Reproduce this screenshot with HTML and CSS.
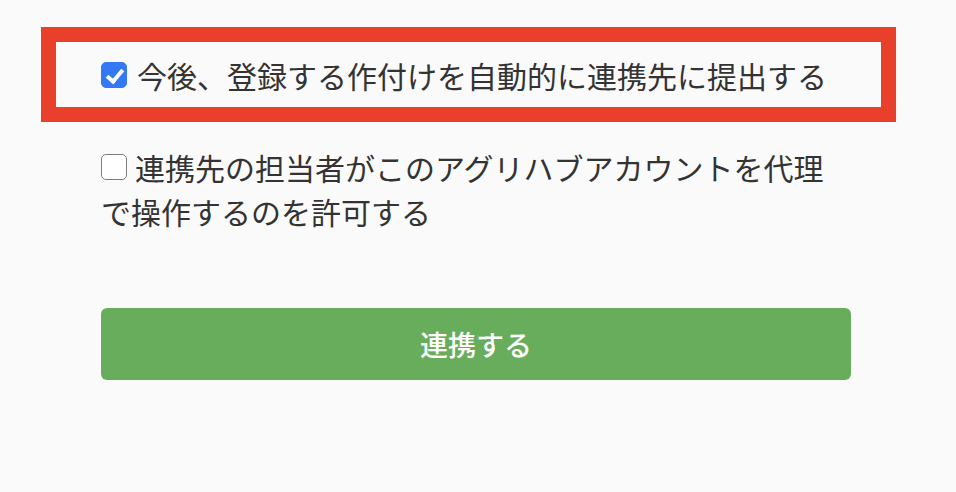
FILE: index.html
```html
<!DOCTYPE html>
<html lang="ja">
<head>
<meta charset="utf-8">
<link rel="stylesheet" href="styles.css">
</head>
<body>
<div class="page">
  <div class="highlight">
    <label class="option">
      <input type="checkbox" class="box" checked>
      <span class="text">今後、登録する作付けを自動的に連携先に提出する</span>
    </label>
  </div>
  <div class="content">
    <label class="option option-wrap"><input type="checkbox" class="box"><span class="text">連携先の担当者がこのアグリハブアカウントを代理で操作するのを許可する</span></label>
    <button class="submit" type="button">連携する</button>
  </div>
</div>
</body>
</html>
```
FILE: styles.css
```css
html, body {
  margin: 0;
  padding: 0;
  background: #fafafa;
}
body {
  font-family: "Noto Sans CJK JP", "Noto Sans", sans-serif;
  color: #333333;
  width: 956px;
  height: 492px;
  overflow: hidden;
}
.page {
  padding-top: 27px;
}
.highlight {
  margin-left: 41px;
  width: 780px;
  height: 65px;
  border: 15px solid #e8402a;
  background: #fafafa;
  padding-left: 45px;
  box-sizing: content-box;
  display: flex;
  align-items: center;
}
.content {
  margin-left: 101px;
  width: 750px;
  padding-top: 23px;
}
.option {
  display: flex;
  align-items: center;
  gap: 10px;
  font-size: 30px;
  line-height: 44px;
}
.option-wrap {
  display: block;
}
.option-wrap .box {
  margin-right: 8px;
  vertical-align: baseline;
}
.box {
  appearance: none;
  -webkit-appearance: none;
  margin: 0;
  width: 26px;
  height: 26px;
  flex: none;
  border-radius: 5px;
  border: 1.5px solid #7d7d7d;
  background: #ffffff;
  box-sizing: border-box;
  position: relative;
  display: inline-block;
}
.box:checked {
  background: #3478f6;
  border-color: #3478f6;
}
.box:checked::after {
  content: "";
  position: absolute;
  left: 8px;
  top: 3px;
  width: 6px;
  height: 13px;
  border-right: 4px solid #ffffff;
  border-bottom: 4px solid #ffffff;
  transform: rotate(40deg);
}
.submit {
  display: block;
  margin-top: 75px;
  width: 750px;
  height: 72px;
  border: none;
  border-radius: 6px;
  background: #68ad5c;
  color: #ffffff;
  font-family: "Noto Sans CJK JP", "Noto Sans", sans-serif;
  font-size: 28px;
  font-weight: 500;
  padding: 0;
  cursor: pointer;
}
```
